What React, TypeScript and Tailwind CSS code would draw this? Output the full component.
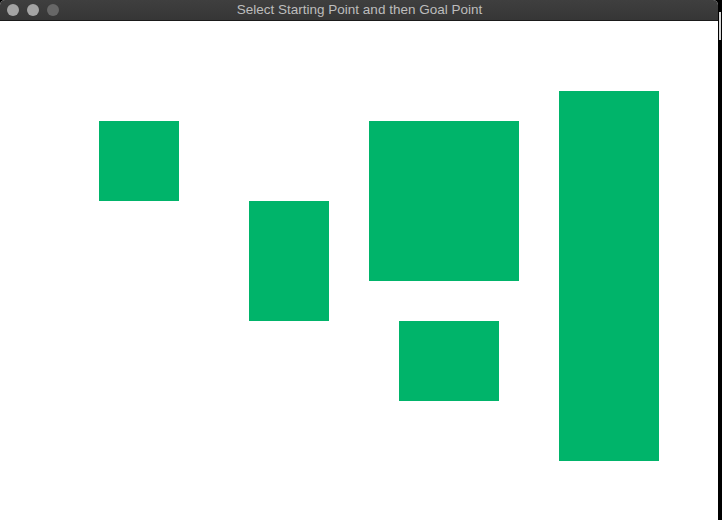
const obstacles = [
  { x: 99, y: 100, w: 80, h: 80 },
  { x: 249, y: 180, w: 80, h: 120 },
  { x: 369, y: 100, w: 150, h: 160 },
  { x: 399, y: 300, w: 100, h: 80 },
  { x: 559, y: 70, w: 100, h: 370 },
];

function TitleBar() {
  return (
    <div className="relative h-[21px] shrink-0 rounded-t-[5px] bg-gradient-to-b from-[#3f3f3f] to-[#363636] border-b border-[#1a1a1a] flex items-center">
      <div className="flex gap-[8px] pl-[7px]">
        <span className="w-[12px] h-[12px] rounded-full bg-[#a4a4a4]" />
        <span className="w-[12px] h-[12px] rounded-full bg-[#a4a4a4]" />
        <span className="w-[12px] h-[12px] rounded-full bg-[#676767]" />
      </div>
      <div className="absolute inset-0 flex items-center justify-center pl-[1px] text-[13.5px] text-[#bdbdbd] font-['Liberation_Sans',Arial,sans-serif]">
        Select Starting Point and then Goal Point
      </div>
    </div>
  );
}

export default function App() {
  return (
    <div className="w-[722px] h-[520px] bg-black flex overflow-hidden">
      <div className="w-[718px] h-full bg-white flex flex-col rounded-t-[5px]">
        <TitleBar />
        <div className="relative flex-1">
          {obstacles.map((o, i) => (
            <div
              key={i}
              className="absolute bg-[#00b46a]"
              style={{ left: o.x, top: o.y, width: o.w, height: o.h }}
            />
          ))}
        </div>
      </div>
      <div className="flex-1 pt-[12px] pl-[1px]">
        <div className="w-[2px] h-[28px] bg-[#d8d8d8]" />
      </div>
    </div>
  );
}
